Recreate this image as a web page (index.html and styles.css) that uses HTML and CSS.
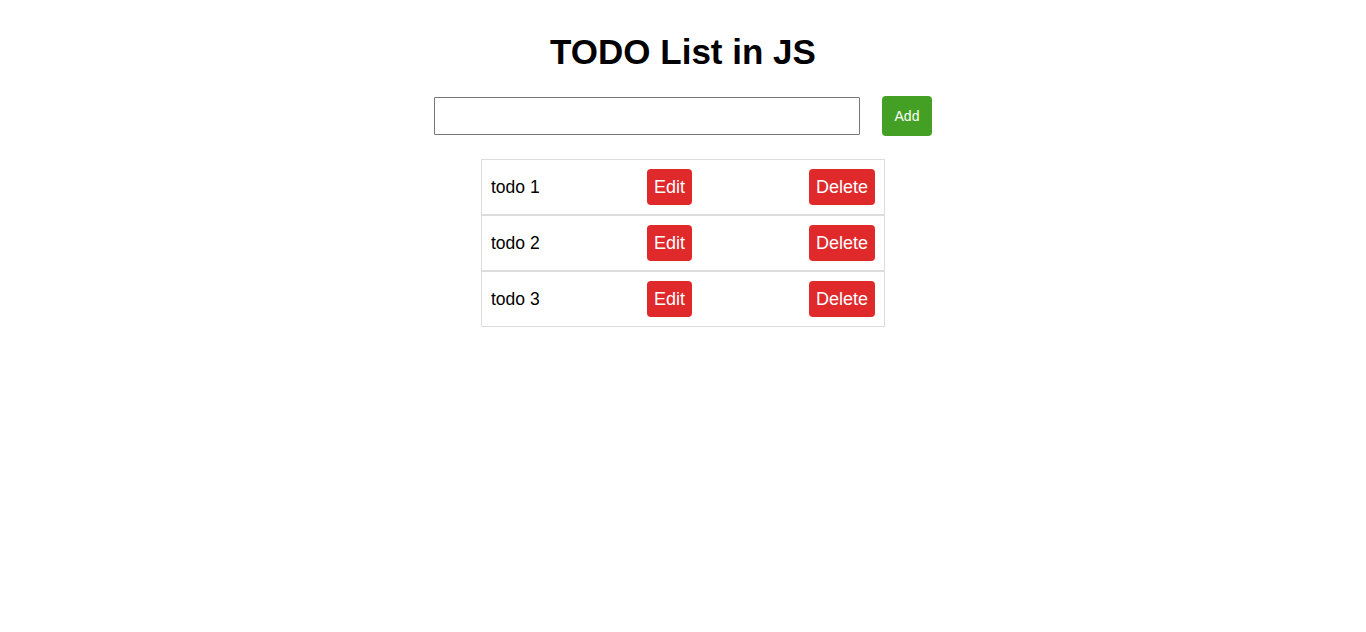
FILE: index.html
```html
<!DOCTYPE html>
<html>
<head>
<meta charset="utf-8">
<link rel="stylesheet" href="styles.css">
</head>
<body>
<main class="app">
  <h1 class="title">TODO List in JS</h1>
  <form class="add-form">
    <input class="add-input" type="text">
    <button class="add-btn" type="button">Add</button>
  </form>
  <ul class="todo-list">
    <li class="todo-item"><span class="todo-text">todo 1</span><button class="btn">Edit</button><button class="btn btn-delete">Delete</button></li>
    <li class="todo-item"><span class="todo-text">todo 2</span><button class="btn">Edit</button><button class="btn btn-delete">Delete</button></li>
    <li class="todo-item"><span class="todo-text">todo 3</span><button class="btn">Edit</button><button class="btn btn-delete">Delete</button></li>
  </ul>
</main>
</body>
</html>
```
FILE: styles.css
```css
html, body {
  margin: 0;
  padding: 0;
  background: #fff;
  font-family: "Liberation Sans", Arial, sans-serif;
  color: #000;
}
.app {
  display: flex;
  flex-direction: column;
  align-items: center;
  padding-top: 32px;
}
.title {
  margin: 0 0 24px;
  font-size: 35px;
  line-height: 40px;
  font-weight: bold;
}
.add-form {
  display: flex;
  align-items: center;
  gap: 22px;
  margin: 0;
}
.add-input {
  box-sizing: border-box;
  width: 426px;
  height: 38px;
  border: 1px solid #767676;
  border-radius: 1px;
  padding: 0 4px;
  font-family: inherit;
  font-size: 16px;
}
.add-btn {
  box-sizing: border-box;
  width: 50px;
  height: 40px;
  border: none;
  border-radius: 4px;
  background: #43a024;
  color: #fff;
  font-family: inherit;
  font-size: 14px;
  padding: 0;
}
.todo-list {
  list-style: none;
  margin: 23px 0 0;
  padding: 0;
  width: 404px;
}
.todo-item {
  display: flex;
  align-items: center;
  padding: 9px;
  border: 1px solid #dcdcdc;
  height: 36px;
}
.todo-text {
  width: 156px;
  font-size: 17.5px;
}
.btn {
  height: 36px;
  padding: 0 7px;
  border: none;
  border-radius: 4px;
  background: #e0292b;
  color: #fff;
  font-family: inherit;
  font-size: 18px;
}
.btn-delete {
  margin-left: auto;
}
```
